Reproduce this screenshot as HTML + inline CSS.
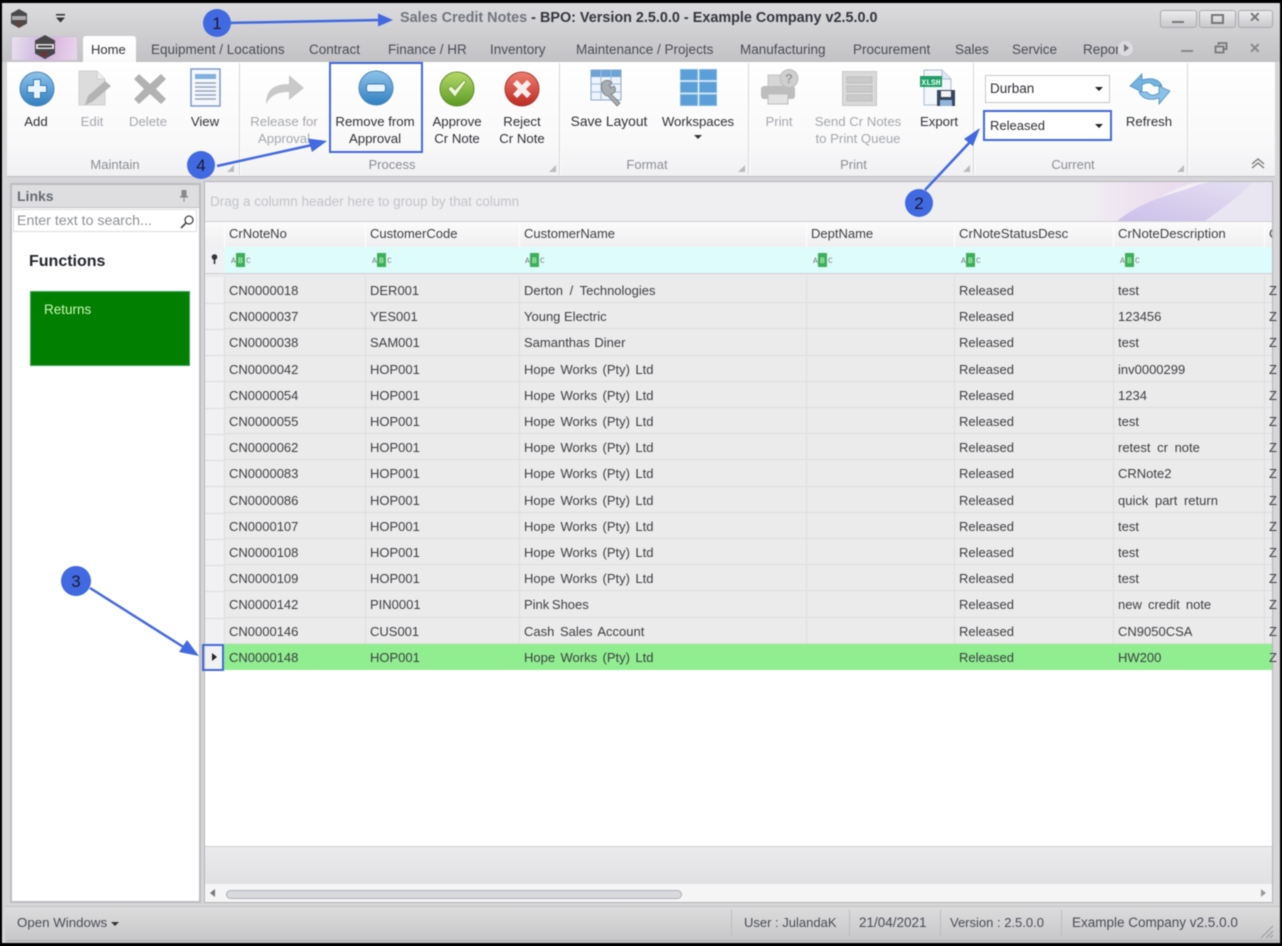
<!DOCTYPE html>
<html><head><meta charset="utf-8"><style>
html,body{margin:0;padding:0;background:#000;}
body{width:1282px;height:946px;overflow:hidden;position:relative;font:13px/16px "Liberation Sans",sans-serif;color:#3a3a40;}
#w{position:absolute;left:0;top:0;width:1282px;height:946px;overflow:hidden;filter:blur(.4px);}
#w div,#w span.a{position:absolute;white-space:nowrap;}
.t{color:#4a4c55;font-size:13.5px;}
.l{text-align:center;line-height:16.5px;color:#2f3036;font-size:13.2px;}
.d{color:#a5a7ad;}
.g{color:#8b8d93;font-size:13px;text-align:center;}
.sep{width:1px;background:#d6d6da;top:63px;height:112px;box-shadow:1px 0 0 #fff;}
.r{left:205px;width:1067px;height:26.2px;background:#ebebeb;border-bottom:1px solid #dddde0;box-sizing:border-box;}
.r span{position:absolute;top:6px;color:#3e3e44;word-spacing:1.8px;z-index:3;}
.c0{left:24px}.c1{left:165px}.c2{left:319px}
.v{width:1px;background:#dddde0;top:277px;height:367px;}
.i{left:205px;width:19px;height:1px;background:#dddde0;}
.h{top:226px;color:#3e3e44;}
.ff{top:222px;height:25px;background:linear-gradient(#fbfbfb,#efeff1);}
.st{top:915px;color:#4a4c55;font-size:13px;}
</style></head><body><div id="w">

<!-- window chrome -->
<div style="left:2px;top:3px;width:1278px;height:940px;background:#d6d6d9;"></div>
<div style="left:2px;top:3px;width:1278px;height:59px;background:linear-gradient(#dcdcde,#c2c2c5);"></div>

<!-- app icon -->
<svg style="position:absolute;left:9px;top:8px" width="20" height="22" viewBox="0 0 20 22"><path d="M10 1l8 4.500v10L10 20l-8-4.500v-10z" fill="#4a4a4c"/><rect x="3" y="8" width="14" height="4" fill="#aaa"/><circle cx="10" cy="16" r="2" fill="#7a3a3a"/></svg>
<svg style="position:absolute;left:55px;top:14px" width="12" height="9"><rect x="1" y="0" width="9" height="1.500" fill="#333"/><path d="M1 3.500h9l-4.500 5z" fill="#333"/></svg>

<!-- title -->
<div style="left:400px;top:10px;font-weight:bold;font-size:14.4px;color:#71757e;">Sales Credit Notes<span style="color:#33363e"> - BPO: Version 2.5.0.0 - Example Company v2.5.0.0</span></div>

<!-- window buttons -->
<div style="left:1160px;top:10px;width:35px;height:16px;border:1px solid #a9a9ad;border-radius:3px;background:linear-gradient(#ececee,#c9c9cc)"></div>
<div style="left:1172px;top:21px;width:12px;height:2px;background:#777"></div>
<div style="left:1199px;top:10px;width:35px;height:16px;border:1px solid #a9a9ad;border-radius:3px;background:linear-gradient(#ececee,#c9c9cc)"></div>
<div style="left:1211px;top:14px;width:9px;height:6px;border:2px solid #777"></div>
<div style="left:1238px;top:10px;width:33px;height:16px;border:1px solid #a9a9ad;border-radius:3px;background:linear-gradient(#ececee,#c9c9cc)"></div>
<div style="left:1249px;top:9px;font-weight:bold;font-size:14px;color:#777">✕</div>

<!-- app menu button -->
<div style="left:11px;top:36px;width:67px;height:25px;border-radius:3px 3px 0 0;background:linear-gradient(100deg,#e8e2ee,#cdb0dc 50%,#e3c6e6 80%,#e4d8ea);border:1px solid #c9c2d0;box-sizing:border-box"></div>
<svg style="position:absolute;left:33px;top:34px" width="24" height="27" viewBox="0 0 24 27"><path d="M12 1l10 5.500v13L12 25 2 19.500v-13z" fill="#47474a"/><rect x="3" y="10" width="18" height="5" fill="#ddd"/><rect x="5" y="11.500" width="14" height="2" fill="#444"/><circle cx="11" cy="20" r="2.500" fill="#7a3030"/></svg>

<!-- tabs -->
<div style="left:83px;top:36px;width:53px;height:27px;background:linear-gradient(#fff,#fafafa);border-radius:3px 3px 0 0;"></div>
<div class="t" style="left:91px;top:42px;color:#2f3036;font-size:13px">Home</div>
<div class="t" style="left:151px;top:42px">Equipment / Locations</div>
<div class="t" style="left:309px;top:42px">Contract</div>
<div class="t" style="left:388px;top:42px">Finance / HR</div>
<div class="t" style="left:490px;top:42px">Inventory</div>
<div class="t" style="left:576px;top:42px">Maintenance / Projects</div>
<div class="t" style="left:740px;top:42px">Manufacturing</div>
<div class="t" style="left:853px;top:42px">Procurement</div>
<div class="t" style="left:955px;top:42px">Sales</div>
<div class="t" style="left:1012px;top:42px">Service</div>
<div class="t" style="left:1083px;top:42px">Repor</div>
<div style="left:1118px;top:41px;width:15px;height:15px;border-radius:50%;background:#dcdce0"></div>
<div style="left:1124px;top:44px;width:0;height:0;border-left:5px solid #777;border-top:4px solid transparent;border-bottom:4px solid transparent"></div>
<div style="left:1181px;top:50px;width:12px;height:2px;background:#888"></div>
<svg style="position:absolute;left:1214px;top:42px" width="14" height="12"><path d="M4.500 3V1h8v6h-3M1.500 4.500h8v6h-8z" fill="none" stroke="#777" stroke-width="1.800"/></svg>
<div style="left:1249px;top:40px;font-weight:bold;font-size:14px;color:#888">✕</div>

<!-- ribbon -->
<div style="left:7px;top:62px;width:1268px;height:114px;background:linear-gradient(#fff 0,#f9f9fa 70%,#f1f1f3);border-bottom:1px solid #bcbcc0"></div>
<div class="sep" style="left:239px"></div><div class="sep" style="left:559px"></div><div class="sep" style="left:748px"></div><div class="sep" style="left:973px"></div><div class="sep" style="left:1187px"></div>

<!-- Add -->
<svg style="position:absolute;left:19px;top:71px" width="36" height="36" viewBox="0 0 36 36"><defs><linearGradient id="bl" x1="0" y1="0" x2="0" y2="1"><stop offset="0" stop-color="#8fc4ea"/><stop offset="1" stop-color="#2f7fc1"/></linearGradient><linearGradient id="gr" x1="0" y1="0" x2="0" y2="1"><stop offset="0" stop-color="#b6d96a"/><stop offset="1" stop-color="#5b9a22"/></linearGradient><linearGradient id="rd" x1="0" y1="0" x2="0" y2="1"><stop offset="0" stop-color="#ef7d70"/><stop offset="1" stop-color="#bb2a22"/></linearGradient></defs><circle cx="18" cy="18" r="17" fill="url(#bl)" stroke="#4a86b8"/><path d="M14.500 8.500h7v6h6v7h-6v6h-7v-6h-6v-7h6z" fill="#e9f3fb" stroke="#3a78ad"/></svg>
<div class="l" style="left:16px;top:114px;width:40px">Add</div>
<!-- Edit -->
<svg style="position:absolute;left:77px;top:69px" width="36" height="40" viewBox="0 0 36 40"><path d="M2 2h18l8 8v26H2z" fill="#dcdcdc" stroke="#cfcfcf"/><path d="M20 2v8h8" fill="#eee" stroke="#cfcfcf"/><path d="M8 36l3-9L28 12l6 5L15 33z" fill="#b3b3b3"/></svg>
<div class="l d" style="left:72px;top:114px;width:40px">Edit</div>
<!-- Delete -->
<svg style="position:absolute;left:133px;top:72px" width="34" height="34" viewBox="0 0 34 34"><path d="M6 2l11 10L28 2l5 5-10 10 10 10-5 5-11-10L6 32l-5-5 10-10L1 7z" fill="#b2b2b2"/></svg>
<div class="l d" style="left:128px;top:114px;width:40px">Delete</div>
<!-- View -->
<svg style="position:absolute;left:190px;top:68px" width="32" height="39" viewBox="0 0 32 39"><rect x="1" y="1" width="29" height="37" fill="#f6f8fc" stroke="#7d9cc8" stroke-width="1.500"/><rect x="5" y="6" width="21" height="5" fill="#7fb1de"/><path d="M5 15h21M5 19h21M5 23h21M5 27h21M5 31h21" stroke="#93a5bd" stroke-width="1.500"/></svg>
<div class="l" style="left:185px;top:114px;width:40px">View</div>
<div class="g" style="left:7px;top:157px;width:216px">Maintain</div>
<svg style="position:absolute;left:227px;top:165px" width="7" height="7"><path d="M7 0v7H0z" fill="#bbb"/></svg>

<!-- Release -->
<svg style="position:absolute;left:264px;top:73px" width="42" height="32" viewBox="0 0 42 32"><path d="M2 31C2 17 10 11 25 11V2l15 13-15 12v-8C14 19 7 22 2 31z" fill="#c9c9c9"/></svg>
<div class="l d" style="left:244px;top:114px;width:80px">Release for<br>Approval</div>
<!-- Remove -->
<svg style="position:absolute;left:358px;top:70px" width="36" height="36" viewBox="0 0 36 36"><circle cx="18" cy="18" r="17" fill="url(#bl)" stroke="#4a86b8"/><rect x="8.500" y="14" width="19" height="8" rx="2.500" fill="#e9f3fb" stroke="#3a78ad"/></svg>
<div class="l" style="left:330px;top:114px;width:90px">Remove from<br>Approval</div>
<!-- Approve -->
<svg style="position:absolute;left:439px;top:71px" width="36" height="36" viewBox="0 0 36 36"><circle cx="18" cy="18" r="17" fill="url(#gr)" stroke="#5f8f2d"/><path d="M9 18l3-3 4 4 9-10 2 2-11 15z" fill="#eef6dd" stroke="#6b9a37" stroke-width=".7"/></svg>
<div class="l" style="left:427px;top:114px;width:60px">Approve<br>Cr Note</div>
<!-- Reject -->
<svg style="position:absolute;left:504px;top:71px" width="36" height="36" viewBox="0 0 36 36"><circle cx="18" cy="18" r="17" fill="url(#rd)" stroke="#a83a32"/><path d="M13 9l5 5 5-5 4 4-5 5 5 5-4 4-5-5-5 5-4-4 5-5-5-5z" fill="#fbeeee"/></svg>
<div class="l" style="left:492px;top:114px;width:60px">Reject<br>Cr Note</div>
<div class="g" style="left:240px;top:157px;width:304px">Process</div>
<svg style="position:absolute;left:549px;top:165px" width="7" height="7"><path d="M7 0v7H0z" fill="#bbb"/></svg>

<!-- Save Layout -->
<svg style="position:absolute;left:590px;top:69px" width="38" height="38" viewBox="0 0 38 38"><rect x="1" y="1" width="30" height="30" fill="#edf3fa" stroke="#86a9d0"/><rect x="1" y="1" width="30" height="7" fill="#6ea3d6"/><path d="M1 15h30M1 23h30M11 1v30M21 1v30" stroke="#9ebad8"/><path d="M12 14c3-4 9-3 10 0l-3 2 2 3 3-2c3 3 1 8-3 8l9 9-3 3-9-10c-5 0-8-8-6-13z" fill="#a8adb3" stroke="#74787e" stroke-width=".8"/></svg>
<div class="l" style="left:565px;top:114px;width:88px;font-size:13.8px">Save Layout</div>
<!-- Workspaces -->
<svg style="position:absolute;left:680px;top:69px" width="37" height="37" viewBox="0 0 37 37"><g fill="#5a9fd8" stroke="#7fb5e0"><rect x=".5" y=".5" width="17" height="10.500"/><rect x="19.500" y=".5" width="17" height="10.500"/><rect x=".5" y="13" width="17" height="10.500"/><rect x="19.500" y="13" width="17" height="10.500"/><rect x=".5" y="25.500" width="17" height="11"/><rect x="19.500" y="25.500" width="17" height="11"/></g></svg>
<div class="l" style="left:653px;top:114px;width:90px">Workspaces</div>
<div style="left:694px;top:135px;width:0;height:0;border-top:4px solid #333;border-left:4px solid transparent;border-right:4px solid transparent"></div>
<div class="g" style="left:560px;top:157px;width:174px">Format</div>
<svg style="position:absolute;left:738px;top:165px" width="7" height="7"><path d="M7 0v7H0z" fill="#bbb"/></svg>

<!-- Print -->
<svg style="position:absolute;left:760px;top:69px" width="40" height="36" viewBox="0 0 40 36"><rect x="8" y="6" width="20" height="14" fill="#d6d6d6" stroke="#c4c4c4"/><rect x="1" y="17" width="34" height="13" rx="3" fill="#bdbdbd"/><rect x="8" y="25" width="20" height="10" fill="#e2e2e2" stroke="#bcbcbc"/><circle cx="29" cy="9.500" r="9" fill="#cfcfcf" stroke="#bdbdbd"/><text x="29" y="14" font-size="13" font-weight="bold" fill="#9a9a9a" text-anchor="middle" font-family="Liberation Sans">?</text></svg>
<div class="l d" style="left:759px;top:114px;width:40px">Print</div>
<!-- Send -->
<svg style="position:absolute;left:842px;top:71px" width="36" height="36" viewBox="0 0 36 36"><rect x=".5" y=".5" width="34" height="34" fill="#d9d9d9" stroke="#c8c8c8"/><rect x="5" y="6" width="25" height="6" fill="#cacaca" stroke="#bdbdbd"/><rect x="5" y="15" width="25" height="6" fill="#cacaca" stroke="#bdbdbd"/><rect x="5" y="24" width="25" height="6" fill="#cacaca" stroke="#bdbdbd"/></svg>
<div class="l d" style="left:803px;top:114px;width:110px">Send Cr Notes<br>to Print Queue</div>
<!-- Export -->
<svg style="position:absolute;left:919px;top:69px" width="40" height="38" viewBox="0 0 40 38"><path d="M5 1h18l9 9v26H5z" fill="#f3f6fb" stroke="#a9bcd6"/><path d="M23 1v9h9" fill="#dfe7f2" stroke="#a9bcd6"/><rect x="1" y="7" width="22" height="11" fill="#1f9e68"/><text x="12" y="16" font-size="8" font-weight="bold" fill="#eafff3" text-anchor="middle" font-family="Liberation Mono">XLSH</text><rect x="18" y="21" width="18" height="16" fill="#37475f"/><rect x="22" y="22" width="10" height="6" fill="#f2f2f2"/><rect x="21" y="31" width="12" height="6" fill="#8fb6da"/></svg>
<div class="l" style="left:919px;top:114px;width:40px">Export</div>
<div class="g" style="left:749px;top:157px;width:209px">Print</div>
<svg style="position:absolute;left:963px;top:165px" width="7" height="7"><path d="M7 0v7H0z" fill="#bbb"/></svg>

<!-- Combos -->
<div style="left:985px;top:75px;width:123px;height:26px;background:#fff;border:1px solid #c9c9cc"></div>
<div style="left:990px;top:81px;color:#2f3036;font-size:13.5px">Durban</div>
<div style="left:1095px;top:87px;width:0;height:0;border-top:4px solid #222;border-left:4px solid transparent;border-right:4px solid transparent"></div>
<div style="left:983px;top:110px;width:125px;height:27px;background:#fff;border:2.500px solid #4169d9"></div>
<div style="left:990px;top:118px;color:#2f3036">Released</div>
<div style="left:1095px;top:124px;width:0;height:0;border-top:4px solid #222;border-left:4px solid transparent;border-right:4px solid transparent"></div>
<!-- Refresh -->
<svg style="position:absolute;left:1129px;top:72px" width="42" height="34" viewBox="0 0 42 34"><path d="M1 14L13 2v6c9-3 17-1 20 6h-8c-3-4-7-4-12-1v7z" fill="#74b3df" stroke="#4c8ec0" stroke-width=".8"/><path d="M41 19L30 32v-6c-9 3-17 1-20-6h8c3 4 7 4 12 1v-7z" fill="#8cc2e6" stroke="#4c8ec0" stroke-width=".8"/></svg>
<div class="l" style="left:1119px;top:114px;width:60px">Refresh</div>
<div class="g" style="left:974px;top:157px;width:198px">Current</div>
<svg style="position:absolute;left:1177px;top:165px" width="7" height="7"><path d="M7 0v7H0z" fill="#bbb"/></svg>
<svg style="position:absolute;left:1250px;top:157px" width="16" height="13"><path d="M2 7l6-5 6 5M2 11l6-5 6 5" fill="none" stroke="#777" stroke-width="1.300"/></svg>

<!-- Links panel -->
<div style="left:10px;top:183px;width:191px;height:720px;background:#fff;border:2px solid #bcbcc0;box-sizing:border-box"></div>
<div style="left:12px;top:185px;width:187px;height:22px;background:#dedee1;border-bottom:1px solid #c0c0c4"></div>
<div style="left:17px;top:188px;font-weight:bold;color:#666a72;font-size:14px">Links</div>
<svg style="position:absolute;left:179px;top:190px" width="10" height="12"><path d="M2.500 0h5v6h1.500v1.500H1V6h1.500zM4.500 7.500h1V12h-1z" fill="#888"/></svg>
<div style="left:13px;top:209px;width:184px;height:23px;background:#fff;border:1px solid #dcdcdf;box-sizing:border-box"></div>
<div style="left:17px;top:213px;color:#8e9096;font-size:14.200px">Enter text to search...</div>
<svg style="position:absolute;left:180px;top:214px" width="15" height="15"><circle cx="9" cy="6" r="4" fill="none" stroke="#444" stroke-width="1.300"/><path d="M6 9l-5 5" stroke="#444" stroke-width="1.600"/></svg>
<div style="left:29px;top:254px;font-weight:bold;font-size:16px;color:#23252c">Functions</div>
<div style="left:30px;top:291px;width:160px;height:75px;background:#017f01;border:1px solid #3aa05a;box-sizing:border-box"></div>
<div style="left:44px;top:302px;color:#cdf7b5;font-size:13.500px">Returns</div>

<!-- grid container -->
<div style="left:204px;top:181px;width:1069px;height:722px;background:#fff;border:1px solid #b4b4b8;box-sizing:border-box"></div>
<div style="left:205px;top:182px;width:1067px;height:40px;background:#efeff1;overflow:hidden">
  <svg style="position:absolute;left:885px;top:0" width="182" height="40" viewBox="0 0 182 40"><defs><linearGradient id="p" x1="0" y1="0" x2="1" y2="0"><stop offset="0" stop-color="#efeff1"/><stop offset=".12" stop-color="#efe8f1"/><stop offset=".42" stop-color="#ecddee"/><stop offset="1" stop-color="#ebe6f1"/></linearGradient><linearGradient id="q" x1="0" y1="1" x2="1" y2="0"><stop offset="0" stop-color="#cbbfe9"/><stop offset="1" stop-color="#e5e0f2"/></linearGradient></defs><rect width="182" height="40" fill="url(#p)"/><path d="M30 40C55 24 80 6 108 0h18C100 14 60 26 40 40z" fill="#f1eff4"/><path d="M26 40C50 20 75 14 100 6c6-3 16-6 26-6h40c-12 10-36 28-52 40z" fill="url(#q)"/><path d="M114 40c14-10 36-26 48-40h20v40z" fill="#e9e6f1"/></svg>
</div>
<div style="left:210px;top:194px;color:#c3c4c9;font-size:13.500px">Drag a column header here to group by that column</div>

<!-- header row -->
<div class="ff" style="left:205px;width:19px"></div>
<div class="ff" style="left:225px;width:140px"></div>
<div class="ff" style="left:366px;width:153px"></div>
<div class="ff" style="left:520px;width:286px"></div>
<div class="ff" style="left:807px;width:147px"></div>
<div class="ff" style="left:955px;width:158px"></div>
<div class="ff" style="left:1114px;width:150px"></div>
<div class="ff" style="left:1265px;width:7px"></div>
<div style="left:205px;top:221px;width:1067px;height:1px;background:#cfcfd3"></div>
<div class="h" style="left:229px">CrNoteNo</div>
<div class="h" style="left:370px">CustomerCode</div>
<div class="h" style="left:524px">CustomerName</div>
<div class="h" style="left:811px">DeptName</div>
<div class="h" style="left:959px;font-size:13.200px">CrNoteStatusDesc</div>
<div class="h" style="left:1118px;font-size:13.200px">CrNoteDescription</div>
<div class="h" style="left:1269px;width:3px;overflow:hidden">C</div>

<!-- filter row -->
<div style="left:205px;top:247px;width:19px;height:26px;background:#f1f1f3"></div>
<div style="left:224px;top:247px;width:1048px;height:26px;background:#dffcfc"></div>
<div style="left:205px;top:273px;width:1067px;height:4px;background:#e9e9ec;border-top:1px solid #cfcfd3;box-sizing:border-box"></div>
<svg style="position:absolute;left:210px;top:254px" width="9" height="11"><circle cx="4.500" cy="3" r="2.800" fill="#333"/><rect x="3.700" y="4" width="1.600" height="6" fill="#333"/></svg>

<svg style="position:absolute;left:0;top:0" width="1282" height="300">
<defs><g id="abc"><text x="0" y="10" font-size="8" fill="#777" font-family="Liberation Mono">A</text><rect x="5" y="0" width="9" height="14" fill="#3cb054"/><text x="7" y="10" font-size="8" fill="#d4f5d8" font-family="Liberation Mono">B</text><text x="15" y="10" font-size="8" fill="#777" font-family="Liberation Mono">C</text></g></defs>
<use href="#abc" x="231" y="253"/><use href="#abc" x="372" y="253"/><use href="#abc" x="525" y="253"/><use href="#abc" x="813" y="253"/><use href="#abc" x="961" y="253"/><use href="#abc" x="1120" y="253"/>
</svg>

<!-- rows -->
<div class="r" style="top:277px"><span class="c0">CN0000018</span><span class="c1">DER001</span><span class="c2" style="word-spacing:3px">Derton / Technologies</span><span style="left:754px">Released</span><span style="left:913px">test</span><span style="left:1064px">Z</span></div>
<div class="r" style="top:303.200px"><span class="c0">CN0000037</span><span class="c1">YES001</span><span class="c2" style="word-spacing:0">Young Electric</span><span style="left:754px">Released</span><span style="left:913px">123456</span><span style="left:1064px">Z</span></div>
<div class="r" style="top:329.400px"><span class="c0">CN0000038</span><span class="c1">SAM001</span><span class="c2" style="word-spacing:1px">Samanthas Diner</span><span style="left:754px">Released</span><span style="left:913px">test</span><span style="left:1064px">Z</span></div>
<div class="r" style="top:355.600px"><span class="c0">CN0000042</span><span class="c1">HOP001</span><span class="c2">Hope Works (Pty) Ltd</span><span style="left:754px">Released</span><span style="left:913px">inv0000299</span><span style="left:1064px">Z</span></div>
<div class="r" style="top:381.800px"><span class="c0">CN0000054</span><span class="c1">HOP001</span><span class="c2">Hope Works (Pty) Ltd</span><span style="left:754px">Released</span><span style="left:913px">1234</span><span style="left:1064px">Z</span></div>
<div class="r" style="top:408px"><span class="c0">CN0000055</span><span class="c1">HOP001</span><span class="c2">Hope Works (Pty) Ltd</span><span style="left:754px">Released</span><span style="left:913px">test</span><span style="left:1064px">Z</span></div>
<div class="r" style="top:434.200px"><span class="c0">CN0000062</span><span class="c1">HOP001</span><span class="c2">Hope Works (Pty) Ltd</span><span style="left:754px">Released</span><span style="left:913px;word-spacing:3px">retest cr note</span><span style="left:1064px">Z</span></div>
<div class="r" style="top:460.400px"><span class="c0">CN0000083</span><span class="c1">HOP001</span><span class="c2">Hope Works (Pty) Ltd</span><span style="left:754px">Released</span><span style="left:913px">CRNote2</span><span style="left:1064px">Z</span></div>
<div class="r" style="top:486.600px"><span class="c0">CN0000086</span><span class="c1">HOP001</span><span class="c2">Hope Works (Pty) Ltd</span><span style="left:754px">Released</span><span style="left:913px;word-spacing:3px">quick part return</span><span style="left:1064px">Z</span></div>
<div class="r" style="top:512.800px"><span class="c0">CN0000107</span><span class="c1">HOP001</span><span class="c2">Hope Works (Pty) Ltd</span><span style="left:754px">Released</span><span style="left:913px">test</span><span style="left:1064px">Z</span></div>
<div class="r" style="top:539px"><span class="c0">CN0000108</span><span class="c1">HOP001</span><span class="c2">Hope Works (Pty) Ltd</span><span style="left:754px">Released</span><span style="left:913px">test</span><span style="left:1064px">Z</span></div>
<div class="r" style="top:565.200px"><span class="c0">CN0000109</span><span class="c1">HOP001</span><span class="c2">Hope Works (Pty) Ltd</span><span style="left:754px">Released</span><span style="left:913px">test</span><span style="left:1064px">Z</span></div>
<div class="r" style="top:591.400px"><span class="c0">CN0000142</span><span class="c1">PIN0001</span><span class="c2" style="word-spacing:-1px">Pink Shoes</span><span style="left:754px">Released</span><span style="left:913px;word-spacing:2.500px">new credit note</span><span style="left:1064px">Z</span></div>
<div class="r" style="top:617.600px"><span class="c0">CN0000146</span><span class="c1">CUS001</span><span class="c2" style="word-spacing:2px">Cash Sales Account</span><span style="left:754px">Released</span><span style="left:913px">CN9050CSA</span><span style="left:1064px">Z</span></div>

<!-- row indicator + vlines -->
<div style="left:205px;top:277px;width:19px;height:393px;background:#f1f1f3"></div>
<div class="v" style="left:224px"></div><div class="v" style="left:365px"></div><div class="v" style="left:519px"></div><div class="v" style="left:806px"></div><div class="v" style="left:954px"></div><div class="v" style="left:1113px"></div><div class="v" style="left:1264px"></div>
<div class="i" style="top:303px"></div><div class="i" style="top:329px"></div><div class="i" style="top:355px"></div><div class="i" style="top:381px"></div><div class="i" style="top:408px"></div><div class="i" style="top:434px"></div><div class="i" style="top:460px"></div><div class="i" style="top:486px"></div><div class="i" style="top:513px"></div><div class="i" style="top:539px"></div><div class="i" style="top:565px"></div><div class="i" style="top:591px"></div><div class="i" style="top:618px"></div>

<!-- selected row -->
<div class="r" style="top:644px;left:224px;width:1048px;background:#90ee90;border-bottom:0"><span style="left:5px">CN0000148</span><span style="left:146px">HOP001</span><span style="left:300px">Hope Works (Pty) Ltd</span><span style="left:735px">Released</span><span style="left:894px">HW200</span><span style="left:1045px">Z</span></div>
<div style="left:202px;top:644px;width:18px;height:23px;border:2.500px solid #4169d9"></div>
<div style="left:212px;top:653px;width:0;height:0;border-left:5px solid #222;border-top:4px solid transparent;border-bottom:4px solid transparent"></div>

<!-- grid footer -->
<div style="left:205px;top:846px;width:1067px;height:38px;background:linear-gradient(#ebebee,#e1e1e4);border-top:1px solid #cfcfd3;box-sizing:border-box"></div>
<div style="left:205px;top:884px;width:1067px;height:18px;background:#f5f5f6"></div>
<div style="left:226px;top:890px;width:454px;height:7px;background:#d9dade;border:1px solid #adafb6;border-radius:5px"></div>
<div style="left:210px;top:889px;width:0;height:0;border-right:5px solid #777;border-top:4px solid transparent;border-bottom:4px solid transparent"></div>
<div style="left:1261px;top:889px;width:0;height:0;border-left:5px solid #999;border-top:4px solid transparent;border-bottom:4px solid transparent"></div>

<!-- status bar -->
<div style="left:5px;top:906px;width:1275px;height:37px;background:linear-gradient(#dcdcdd,#c6c6c8);border-top:1px solid #c4c4c6;box-sizing:border-box"></div>
<div style="left:7px;top:940px;width:1271px;height:1px;background:#acacb0"></div>
<div class="st" style="left:17px;font-size:13.300px;">Open Windows</div>
<div style="left:111px;top:922px;width:0;height:0;border-top:4px solid #333;border-left:4px solid transparent;border-right:4px solid transparent"></div>
<div class="st" style="left:744px;">User : JulandaK</div>
<div class="st" style="left:859px;font-size:13.500px">21/04/2021</div>
<div class="st" style="left:950px;">Version : 2.5.0.0</div>
<div class="st" style="left:1072px;font-size:13.500px;">Example Company v2.5.0.0</div>
<div style="left:731px;top:910px;width:1px;height:26px;background:#bcbcbf"></div>
<div style="left:849px;top:910px;width:1px;height:26px;background:#bcbcbf"></div>
<div style="left:940px;top:910px;width:1px;height:26px;background:#bcbcbf"></div>
<div style="left:1061px;top:910px;width:1px;height:26px;background:#bcbcbf"></div>
<svg style="position:absolute;left:1260px;top:925px" width="14" height="14"><path d="M1 13L13 1M6 13l7-7M10 13l3-3" stroke="#9a9a9e" stroke-width="1"/></svg>

<!-- Annotations -->
<div style="left:329px;top:62px;width:90px;height:87px;border:2.500px solid #4169d9"></div>
<svg style="position:absolute;left:0;top:0" width="1282" height="946" viewBox="0 0 1282 946">
<g fill="#4169e1" stroke="#4169e1">
<path d="M225 23L380 20" stroke-width="2.500"/><path d="M378 13.500L393 20l-15 6.500z" stroke="none"/>
<path d="M217 166L312 145" stroke-width="2.500"/><path d="M308 138.500L327 141l-15 11z" stroke="none"/>
<path d="M925 190L970 142" stroke-width="2.500"/><path d="M964 139L980 128l-7 18z" stroke="none"/>
<path d="M90 588L185 648" stroke-width="2.500"/><path d="M187 640L199 656l-20-4z" stroke="none"/>
</g>
<g fill="#4169e1"><circle cx="217" cy="23" r="14"/><circle cx="201" cy="165" r="14"/><circle cx="919" cy="203" r="14"/><circle cx="76" cy="581" r="15"/></g>
<g font-family="Liberation Sans" font-size="17" fill="#1a1a2a" text-anchor="middle"><text x="217" y="29">1</text><text x="201" y="171">4</text><text x="919" y="209">2</text><text x="76" y="587">3</text></g>
</svg>
</div></body></html>
